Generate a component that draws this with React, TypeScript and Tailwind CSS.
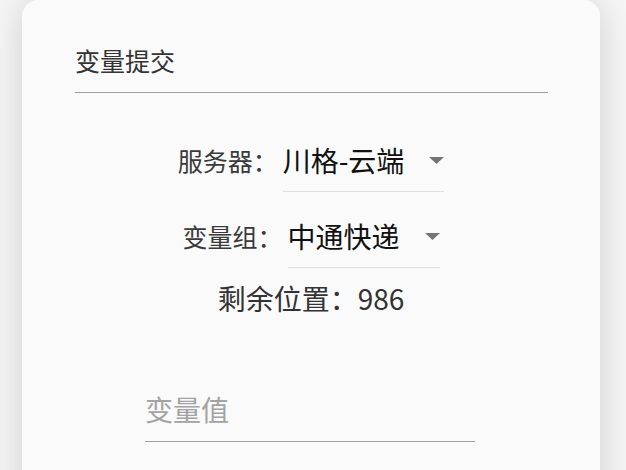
import React from 'react';

const font = { fontFamily: '"Noto Sans CJK SC", "Noto Sans", sans-serif' };

const Caret: React.FC = () => (
    <svg width="15" height="7" viewBox="0 0 15 7" className="ml-[25px] shrink-0">
        <polygon points="0,0 15,0 7.5,7" fill="#757575" />
    </svg>
);

interface RowProps {
    label: string;
    value: string;
    className?: string;
}

const SpinnerRow: React.FC<RowProps> = ({ label, value, className }) => (
    <div className={`flex items-start justify-center ${className ?? ''}`}>
        <span className="pt-[2px] text-[25px] leading-none text-[#3a3a3a]">{label}</span>
        <div className="ml-[5px] flex items-center border-b border-[#e0e0e0] pb-[17px]">
            <span className="text-[28px] leading-none text-[#111]">{value}</span>
            <Caret />
        </div>
    </div>
);

export default function App() {
    return (
        <div className="h-[470px] overflow-hidden bg-[#f7f7f7]" style={font}>
            <div className="ml-[22px] w-[578px] min-h-[540px] rounded-2xl bg-[#fafafa] pt-[48px] shadow-[0_0_40px_rgba(0,0,0,0.17)]">
                <div className="ml-[53px] mr-[52px] border-b border-[#9e9e9e] pb-[19px] text-[25px] leading-none text-[#333]">
                    变量提交
                </div>

                <SpinnerRow label="服务器：" value="川格-云端" className="mt-[53px]" />
                <SpinnerRow label="变量组：" value="中通快递" className="mt-[30px]" />

                <div className="mt-[16px] text-center text-[28px] leading-none text-[#333]">剩余位置：986</div>

                <div className="ml-[123px] mt-[83px] w-[330px] border-b border-[#a0a0a0] pb-[18px] text-[28px] leading-none text-[#a3a3a3]">
                    变量值
                </div>
            </div>
        </div>
    );
}
